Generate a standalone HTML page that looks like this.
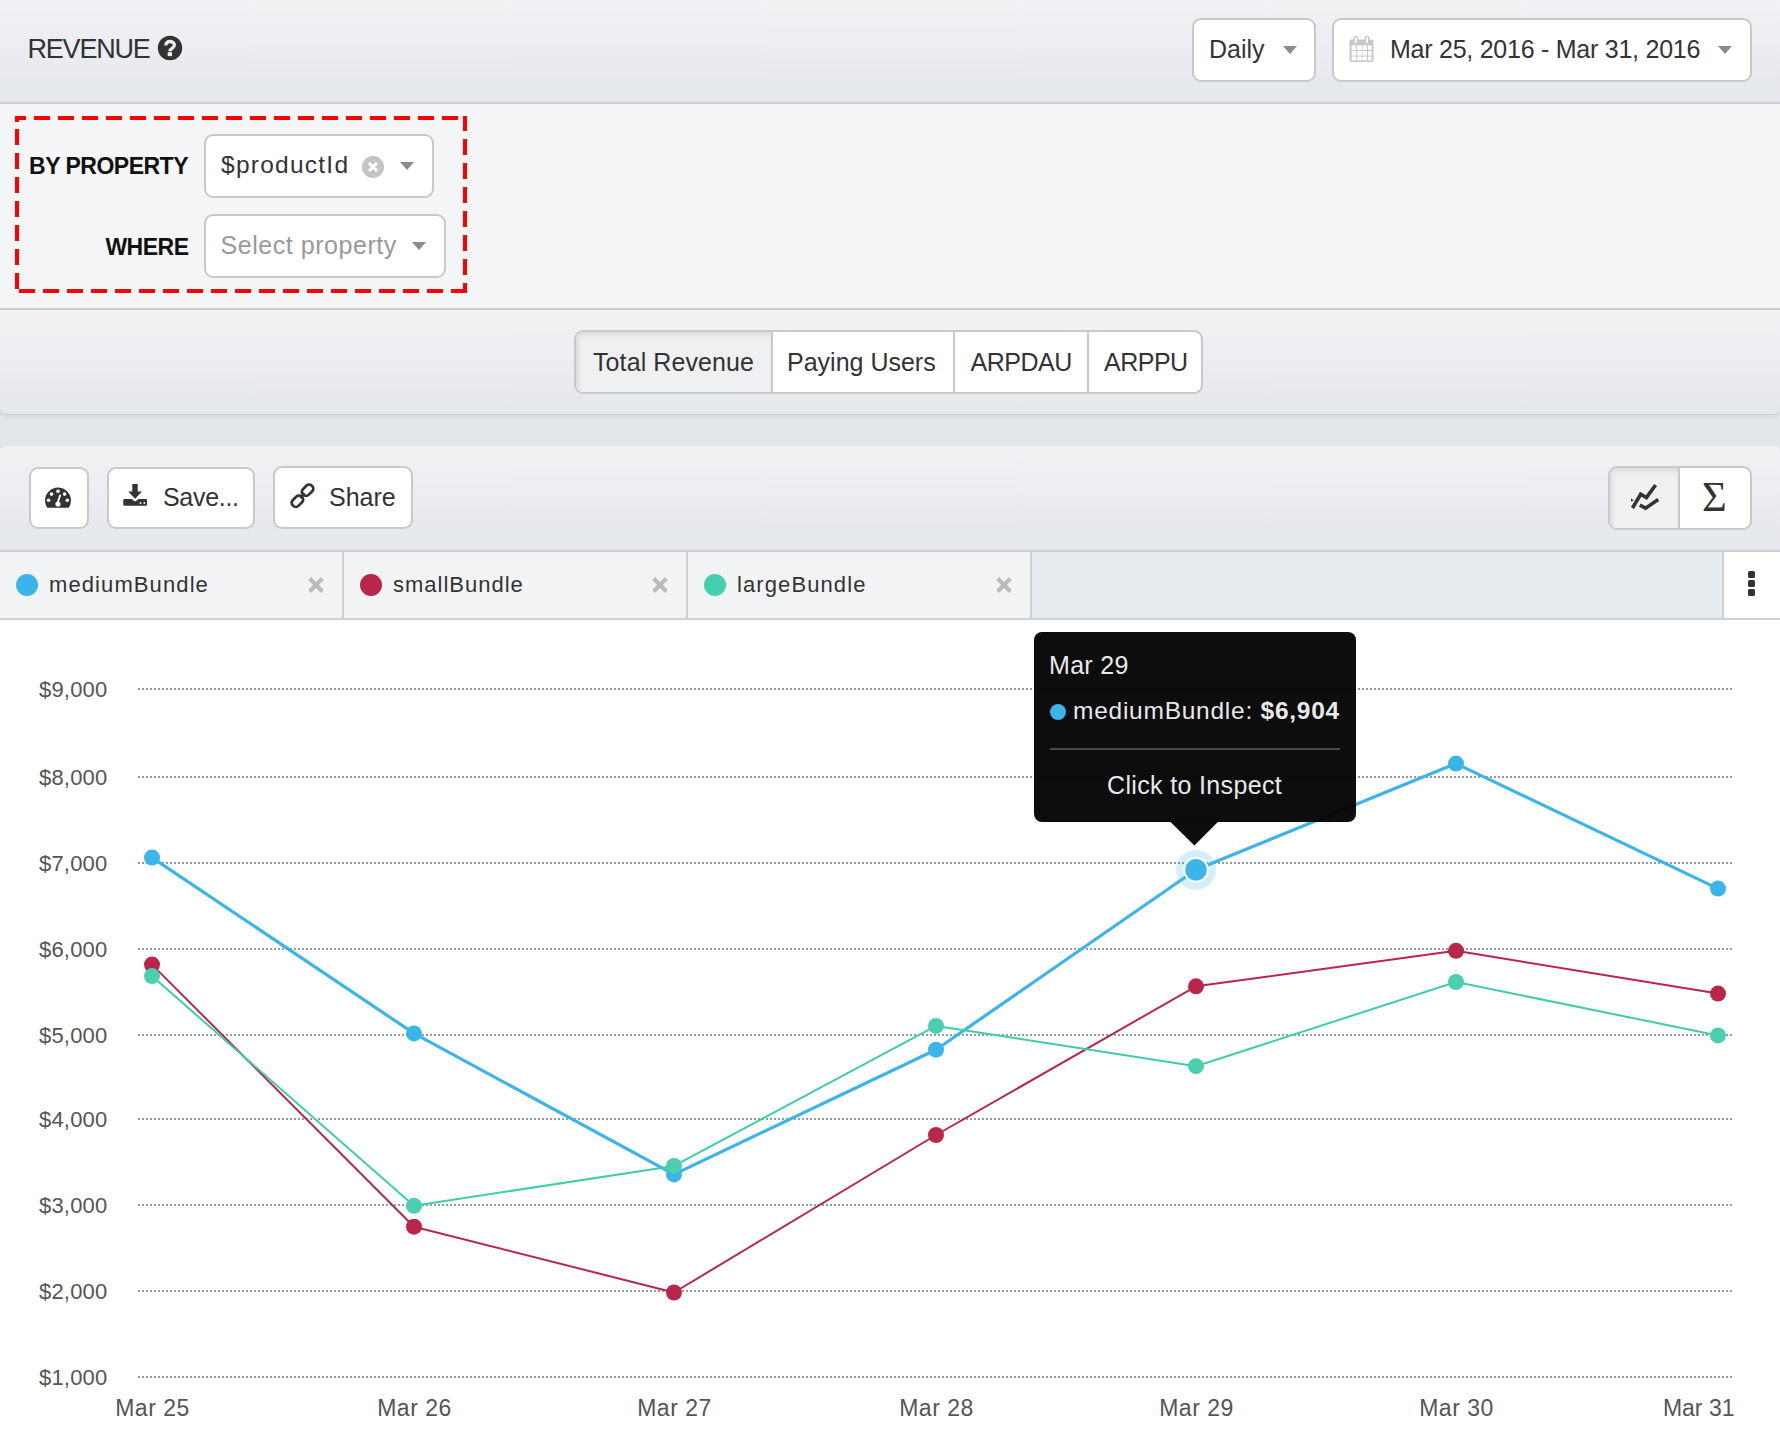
<!DOCTYPE html>
<html><head><meta charset="utf-8">
<style>
*{box-sizing:border-box;margin:0;padding:0}
html,body{width:1780px;height:1434px;overflow:hidden;background:#fff;font-family:"Liberation Sans",sans-serif;color:#333}
.abs{position:absolute}
.txt{position:absolute;white-space:nowrap;line-height:1}
.box{position:absolute;background:#fff;border:2px solid #c8c9cb;border-radius:9px}
.caret{position:absolute;width:0;height:0;border-left:7.5px solid transparent;border-right:7.5px solid transparent;border-top:8px solid #8b8b8b}
</style></head>
<body>

<div class="abs" style="left:0;top:0;width:1780px;height:104px;background:linear-gradient(#f1f2f4,#e4e7eb);border-bottom:2px solid #cbccce"></div>
<div class="txt" style="left:27.5px;top:36.14px;font-size:27px;color:#333;letter-spacing:-1.2px;">REVENUE</div>
<svg class="abs" style="left:157px;top:35px" width="26" height="26" viewBox="0 0 26 26"><circle cx="13" cy="13" r="12.2" fill="#333"/><path d="M8.8 10.6C8.8 7.9 10.6 6.5 13 6.5C15.5 6.5 17.4 7.9 17.4 10.1C17.4 12.8 14.4 13.1 13.1 15.2L12.9 16.3" fill="none" stroke="#eceef0" stroke-width="3.3"/><rect x="10.7" y="17.2" width="4.3" height="3.9" fill="#eceef0"/></svg>
<div class="box" style="left:1192px;top:18px;width:124px;height:64px"></div>
<div class="txt" style="left:1209px;top:36.84px;font-size:25px;color:#333;">Daily</div>
<div class="caret" style="left:1283px;top:46px"></div>
<div class="box" style="left:1332px;top:18px;width:420px;height:64px"></div>
<svg class="abs" style="left:1349px;top:35px" width="26" height="28" viewBox="0 0 26 28"><rect x="0.5" y="4.5" width="24" height="22.5" rx="2" fill="#c8c8c8"/><rect x="2.6" y="10.4" width="4.6" height="4.6" fill="#fff"/><rect x="8.2" y="10.4" width="4.6" height="4.6" fill="#fff"/><rect x="13.4" y="10.4" width="4.6" height="4.6" fill="#fff"/><rect x="19" y="10.4" width="3.6" height="4.6" fill="#fff"/><rect x="2.6" y="16" width="4.6" height="4.6" fill="#fff"/><rect x="8.2" y="16" width="4.6" height="4.6" fill="#fff"/><rect x="13.4" y="16" width="4.6" height="4.6" fill="#fff"/><rect x="19" y="16" width="3.6" height="4.6" fill="#fff"/><rect x="2.6" y="21.6" width="4.6" height="3.8" fill="#fff"/><rect x="8.2" y="21.6" width="4.6" height="3.8" fill="#fff"/><rect x="13.4" y="21.6" width="4.6" height="3.8" fill="#fff"/><rect x="19" y="21.6" width="3.6" height="3.8" fill="#fff"/><rect x="4.4" y="0.8" width="4.8" height="9" rx="2.2" fill="#c8c8c8"/><rect x="15.6" y="0.8" width="4.8" height="9" rx="2.2" fill="#c8c8c8"/><rect x="5.9" y="2.3" width="1.8" height="5.6" fill="#fff"/><rect x="17.1" y="2.3" width="1.8" height="5.6" fill="#fff"/></svg>
<div class="txt" style="left:1390px;top:36.84px;font-size:25px;color:#333;letter-spacing:-0.25px;">Mar 25, 2016 - Mar 31, 2016</div>
<div class="caret" style="left:1718px;top:46px"></div>
<div class="abs" style="left:0;top:104px;width:1780px;height:206px;background:#f4f5f7;border-bottom:2px solid #cbccce"></div>
<div class="txt" style="right:1592px;top:154.53px;font-size:23px;color:#111;font-weight:bold;letter-spacing:-0.5px;">BY PROPERTY</div>
<div class="txt" style="right:1591.5px;top:235.53px;font-size:23px;color:#111;font-weight:bold;letter-spacing:-0.5px;">WHERE</div>
<div class="box" style="left:204px;top:134px;width:230px;height:64px"></div>
<div class="txt" style="left:221px;top:153.26px;font-size:24.5px;color:#333;letter-spacing:1.25px;">$productId</div>
<svg class="abs" style="left:361px;top:155px" width="24" height="24" viewBox="0 0 24 24"><circle cx="12" cy="12" r="11" fill="#c4c4c4"/><path d="M8 8L16 16M16 8L8 16" stroke="#fff" stroke-width="3"/></svg>
<div class="caret" style="left:400px;top:162px"></div>
<div class="box" style="left:204px;top:214px;width:242px;height:64px"></div>
<div class="txt" style="left:220.5px;top:233.34px;font-size:25px;color:#999;letter-spacing:0.55px;">Select property</div>
<div class="caret" style="left:412px;top:242px"></div>
<svg class="abs" style="left:0;top:0" width="480" height="300" fill="#ff0000"><rect x="15" y="116" width="11" height="4"/><rect x="34" y="116" width="16" height="4"/><rect x="58" y="116" width="16" height="4"/><rect x="82" y="116" width="16" height="4"/><rect x="106" y="116" width="16" height="4"/><rect x="130" y="116" width="16" height="4"/><rect x="154" y="116" width="16" height="4"/><rect x="178" y="116" width="16" height="4"/><rect x="202" y="116" width="16" height="4"/><rect x="226" y="116" width="16" height="4"/><rect x="250" y="116" width="16" height="4"/><rect x="274" y="116" width="16" height="4"/><rect x="298" y="116" width="16" height="4"/><rect x="322" y="116" width="16" height="4"/><rect x="346" y="116" width="16" height="4"/><rect x="370" y="116" width="16" height="4"/><rect x="394" y="116" width="16" height="4"/><rect x="418" y="116" width="16" height="4"/><rect x="442" y="116" width="16" height="4"/><rect x="466" y="116" width="1" height="4"/><rect x="463" y="116" width="4" height="15"/><rect x="463" y="139" width="4" height="16"/><rect x="463" y="163" width="4" height="16"/><rect x="463" y="187" width="4" height="16"/><rect x="463" y="211" width="4" height="16"/><rect x="463" y="235" width="4" height="16"/><rect x="463" y="259" width="4" height="16"/><rect x="463" y="283" width="4" height="10"/><rect x="15" y="116" width="4" height="6"/><rect x="15" y="129" width="4" height="16"/><rect x="15" y="153" width="4" height="16"/><rect x="15" y="177" width="4" height="16"/><rect x="15" y="201" width="4" height="16"/><rect x="15" y="225" width="4" height="16"/><rect x="15" y="249" width="4" height="16"/><rect x="15" y="273" width="4" height="16"/><rect x="19" y="289" width="16" height="4"/><rect x="43" y="289" width="16" height="4"/><rect x="67" y="289" width="16" height="4"/><rect x="91" y="289" width="16" height="4"/><rect x="115" y="289" width="16" height="4"/><rect x="139" y="289" width="16" height="4"/><rect x="163" y="289" width="16" height="4"/><rect x="187" y="289" width="16" height="4"/><rect x="211" y="289" width="16" height="4"/><rect x="235" y="289" width="16" height="4"/><rect x="259" y="289" width="16" height="4"/><rect x="283" y="289" width="16" height="4"/><rect x="307" y="289" width="16" height="4"/><rect x="331" y="289" width="16" height="4"/><rect x="355" y="289" width="16" height="4"/><rect x="379" y="289" width="16" height="4"/><rect x="403" y="289" width="16" height="4"/><rect x="427" y="289" width="16" height="4"/><rect x="451" y="289" width="16" height="4"/></svg>
<div class="abs" style="left:0;top:310px;width:1780px;height:150px;background:#e4e7ea"></div>
<div class="abs" style="left:0;top:310px;width:1780px;height:104px;background:linear-gradient(#f1f2f4,#e5e8eb);border-radius:0 0 6px 6px;box-shadow:0 1px 0 rgba(0,0,0,0.08),0 5px 0 rgba(0,0,0,0.03)"></div>
<div class="abs" style="left:574px;top:330px;width:629px;height:64px;background:#fff;border:2px solid #c8c9cb;border-radius:9px;overflow:hidden"><div class="abs" style="left:0;top:0;width:195px;height:60px;background:#eff0f2;box-shadow:inset 2px 3px 5px rgba(0,0,0,0.10)"></div><div class="abs" style="left:195px;top:0;width:2px;height:60px;background:#c8c9cb"></div><div class="abs" style="left:377px;top:0;width:2px;height:60px;background:#c8c9cb"></div><div class="abs" style="left:511px;top:0;width:2px;height:60px;background:#c8c9cb"></div></div>
<div class="txt" style="left:593px;top:349.84px;font-size:25px;color:#333;letter-spacing:0.1px;">Total Revenue</div>
<div class="txt" style="left:787px;top:349.84px;font-size:25px;color:#333;">Paying Users</div>
<div class="txt" style="left:970.5px;top:349.84px;font-size:25px;color:#333;letter-spacing:-0.5px;">ARPDAU</div>
<div class="txt" style="left:1104px;top:349.84px;font-size:25px;color:#333;letter-spacing:-0.5px;">ARPPU</div>
<div class="abs" style="left:0;top:446px;width:1780px;height:106px;background:linear-gradient(#f1f2f4,#e4e7eb);border-radius:6px 6px 0 0;border-bottom:2px solid #cbccce"></div>
<div class="box" style="left:29px;top:467px;width:60px;height:62px"></div>
<svg class="abs" style="left:44px;top:486px" width="28" height="24" viewBox="44 486 28 24"><defs><clipPath id="gc"><rect x="40" y="480" width="40" height="27.8"/></clipPath></defs><g clip-path="url(#gc)"><circle cx="58" cy="500.6" r="13" fill="#333"/></g><g fill="#fff"><circle cx="58" cy="491.3" r="1.8"/><circle cx="51.5" cy="494.1" r="1.8"/><circle cx="64.6" cy="494.1" r="1.8"/><circle cx="48.6" cy="500.3" r="1.8"/><circle cx="67.3" cy="500.3" r="1.8"/><circle cx="58" cy="504" r="2.6"/></g><path d="M57.6 503L60.3 494.8" stroke="#fff" stroke-width="1.9"/></svg>
<div class="box" style="left:107px;top:467px;width:148px;height:62px"></div>
<svg class="abs" style="left:122px;top:483px" width="26" height="24" viewBox="122 483 26 24"><path d="M132.3 484h5.4v7.4h4.3l-6.9 7.3-6.9-7.3h4.1z" fill="#333"/><path d="M123.2 500.3a1.3 1.3 0 0 1 1.3-1.3h7l3.6 2.6 3.6-2.6h7a1.3 1.3 0 0 1 1.3 1.3v4.1a1.3 1.3 0 0 1-1.3 1.3h-21.1a1.3 1.3 0 0 1-1.3-1.3z" fill="#333"/><circle cx="140.5" cy="503" r="0.9" fill="#fff"/><circle cx="144.3" cy="503" r="0.9" fill="#fff"/></svg>
<div class="txt" style="left:163px;top:485.34px;font-size:25px;color:#333;letter-spacing:-0.3px;">Save...</div>
<div class="box" style="left:273px;top:466px;width:140px;height:63px"></div>
<svg class="abs" style="left:288px;top:481px" width="30" height="30" viewBox="288 481 30 30"><g fill="none" stroke="#333" stroke-width="2.7"><rect x="-4" y="-6.2" width="8" height="12.4" rx="3.6" transform="translate(307.6 490.2) rotate(45)"/><rect x="-4" y="-6.2" width="8" height="12.4" rx="3.6" transform="translate(297.4 501.2) rotate(45)"/></g><path d="M300.4 498.2L304.6 493.4" stroke="#333" stroke-width="2.7"/></svg>
<div class="txt" style="left:329px;top:484.84px;font-size:25px;color:#333;">Share</div>
<div class="abs" style="left:1608px;top:466px;width:144px;height:64px;background:#fff;border:2px solid #c8c9cb;border-radius:9px;overflow:hidden"><div class="abs" style="left:0;top:0;width:68px;height:60px;background:#eff0f2;box-shadow:inset 2px 3px 5px rgba(0,0,0,0.10)"></div><div class="abs" style="left:68px;top:0;width:2px;height:60px;background:#c8c9cb"></div></div>
<svg class="abs" style="left:1626px;top:480px" width="38" height="34" viewBox="1626 480 38 34"><path d="M1632.5 508L1640.7 494.3L1646.4 497.6L1655.6 485" fill="none" stroke="#333" stroke-width="3.6" stroke-linejoin="miter"/><path d="M1639.8 505.2L1645.6 508.2L1658.2 499.6" fill="none" stroke="#333" stroke-width="3.6"/><path d="M1631 498.5L1633.8 500.3L1631 501.8z" fill="#333"/></svg>
<div class="txt" style="left:1702px;top:476px;font-family:'Liberation Serif',serif;font-size:42.5px;color:#333">&Sigma;</div>
<div class="abs" style="left:0;top:552px;width:1780px;height:68px;background:#e8ebee;border-bottom:2px solid #cfd0d2"></div>
<div class="abs" style="left:0px;top:552px;width:344px;height:66px;background:#f2f3f5;border-right:2px solid #cfd0d2"></div>
<div class="abs" style="left:16px;top:574px;width:22px;height:22px;border-radius:50%;background:#3bb5e8"></div>
<div class="txt" style="left:49px;top:573.88px;font-size:22px;color:#333;letter-spacing:1.1px;">mediumBundle</div>
<svg class="abs" style="left:308px;top:576.5px" width="16" height="16" viewBox="0 0 16 16"><path d="M1.6 1.6L14.4 14.4M14.4 1.6L1.6 14.4" stroke="#bbbbbb" stroke-width="4.2"/></svg>
<div class="abs" style="left:344px;top:552px;width:344px;height:66px;background:#f2f3f5;border-right:2px solid #cfd0d2"></div>
<div class="abs" style="left:360px;top:574px;width:22px;height:22px;border-radius:50%;background:#b9264b"></div>
<div class="txt" style="left:393px;top:573.88px;font-size:22px;color:#333;letter-spacing:1.0px;">smallBundle</div>
<svg class="abs" style="left:652px;top:576.5px" width="16" height="16" viewBox="0 0 16 16"><path d="M1.6 1.6L14.4 14.4M14.4 1.6L1.6 14.4" stroke="#bbbbbb" stroke-width="4.2"/></svg>
<div class="abs" style="left:688px;top:552px;width:344px;height:66px;background:#f2f3f5;border-right:2px solid #cfd0d2"></div>
<div class="abs" style="left:704px;top:574px;width:22px;height:22px;border-radius:50%;background:#46cfae"></div>
<div class="txt" style="left:737px;top:573.88px;font-size:22px;color:#333;letter-spacing:1.1px;">largeBundle</div>
<svg class="abs" style="left:996px;top:576.5px" width="16" height="16" viewBox="0 0 16 16"><path d="M1.6 1.6L14.4 14.4M14.4 1.6L1.6 14.4" stroke="#bbbbbb" stroke-width="4.2"/></svg>
<div class="abs" style="left:1722px;top:552px;width:58px;height:66px;background:#fff;border-left:2px solid #cfd0d2"></div>
<div class="abs" style="left:1748px;top:571px;width:7px;height:7px;border-radius:1.5px;background:#333"></div>
<div class="abs" style="left:1748px;top:580px;width:7px;height:7px;border-radius:1.5px;background:#333"></div>
<div class="abs" style="left:1748px;top:589px;width:7px;height:7px;border-radius:1.5px;background:#333"></div>
<svg class="abs" style="left:0;top:0" width="1780" height="1434" viewBox="0 0 1780 1434">
<line x1="138" y1="689" x2="1732" y2="689" stroke="#959ba4" stroke-width="2" stroke-dasharray="2 2"/>
<line x1="138" y1="777" x2="1732" y2="777" stroke="#959ba4" stroke-width="2" stroke-dasharray="2 2"/>
<line x1="138" y1="863" x2="1732" y2="863" stroke="#959ba4" stroke-width="2" stroke-dasharray="2 2"/>
<line x1="138" y1="949" x2="1732" y2="949" stroke="#959ba4" stroke-width="2" stroke-dasharray="2 2"/>
<line x1="138" y1="1035" x2="1732" y2="1035" stroke="#959ba4" stroke-width="2" stroke-dasharray="2 2"/>
<line x1="138" y1="1119" x2="1732" y2="1119" stroke="#959ba4" stroke-width="2" stroke-dasharray="2 2"/>
<line x1="138" y1="1205" x2="1732" y2="1205" stroke="#959ba4" stroke-width="2" stroke-dasharray="2 2"/>
<line x1="138" y1="1291" x2="1732" y2="1291" stroke="#959ba4" stroke-width="2" stroke-dasharray="2 2"/>
<line x1="138" y1="1377" x2="1732" y2="1377" stroke="#959ba4" stroke-width="2" stroke-dasharray="2 2"/>
<polyline points="152.0,857.6 414.0,1033.4 674.0,1174.4 936.0,1049.7 1196.0,869.8 1456.0,763.6 1718.0,888.6" fill="none" stroke="#3bb5e8" stroke-width="3.2" stroke-linejoin="round"/>
<circle cx="152.0" cy="857.6" r="8" fill="#3bb5e8"/>
<circle cx="414.0" cy="1033.4" r="8" fill="#3bb5e8"/>
<circle cx="674.0" cy="1174.4" r="8" fill="#3bb5e8"/>
<circle cx="936.0" cy="1049.7" r="8" fill="#3bb5e8"/>
<circle cx="1456.0" cy="763.6" r="8" fill="#3bb5e8"/>
<circle cx="1718.0" cy="888.6" r="8" fill="#3bb5e8"/>
<polyline points="152.0,964.6 414.0,1226.7 674.0,1292.5 936.0,1135.0 1196.0,986.3 1456.0,950.8 1718.0,993.6" fill="none" stroke="#b9264b" stroke-width="2" stroke-linejoin="round"/>
<circle cx="152.0" cy="964.6" r="8" fill="#b9264b"/>
<circle cx="414.0" cy="1226.7" r="8" fill="#b9264b"/>
<circle cx="674.0" cy="1292.5" r="8" fill="#b9264b"/>
<circle cx="936.0" cy="1135.0" r="8" fill="#b9264b"/>
<circle cx="1196.0" cy="986.3" r="8" fill="#b9264b"/>
<circle cx="1456.0" cy="950.8" r="8" fill="#b9264b"/>
<circle cx="1718.0" cy="993.6" r="8" fill="#b9264b"/>
<polyline points="152.0,976.1 414.0,1205.8 674.0,1165.9 936.0,1025.9 1196.0,1066.2 1456.0,982.0 1718.0,1035.4" fill="none" stroke="#3ecdab" stroke-width="2" stroke-linejoin="round"/>
<circle cx="152.0" cy="976.1" r="8" fill="#4ccfb0"/>
<circle cx="414.0" cy="1205.8" r="8" fill="#4ccfb0"/>
<circle cx="674.0" cy="1165.9" r="8" fill="#4ccfb0"/>
<circle cx="936.0" cy="1025.9" r="8" fill="#4ccfb0"/>
<circle cx="1196.0" cy="1066.2" r="8" fill="#4ccfb0"/>
<circle cx="1456.0" cy="982.0" r="8" fill="#4ccfb0"/>
<circle cx="1718.0" cy="1035.4" r="8" fill="#4ccfb0"/>
<circle cx="1196" cy="869.8" r="20" fill="#3bb5e8" fill-opacity="0.22"/>
<circle cx="1196" cy="869.8" r="12.8" fill="#fff"/>
<circle cx="1196" cy="869.8" r="10.8" fill="#3bb5e8"/>
</svg>
<div class="txt" style="right:1672.5px;top:678.88px;font-size:22px;color:#555;letter-spacing:0.2px;">$9,000</div>
<div class="txt" style="right:1672.5px;top:766.88px;font-size:22px;color:#555;letter-spacing:0.2px;">$8,000</div>
<div class="txt" style="right:1672.5px;top:852.88px;font-size:22px;color:#555;letter-spacing:0.2px;">$7,000</div>
<div class="txt" style="right:1672.5px;top:938.88px;font-size:22px;color:#555;letter-spacing:0.2px;">$6,000</div>
<div class="txt" style="right:1672.5px;top:1024.88px;font-size:22px;color:#555;letter-spacing:0.2px;">$5,000</div>
<div class="txt" style="right:1672.5px;top:1108.88px;font-size:22px;color:#555;letter-spacing:0.2px;">$4,000</div>
<div class="txt" style="right:1672.5px;top:1194.88px;font-size:22px;color:#555;letter-spacing:0.2px;">$3,000</div>
<div class="txt" style="right:1672.5px;top:1280.88px;font-size:22px;color:#555;letter-spacing:0.2px;">$2,000</div>
<div class="txt" style="right:1672.5px;top:1366.88px;font-size:22px;color:#555;letter-spacing:0.2px;">$1,000</div>
<div class="txt" style="left:-47.5px;width:400px;text-align:center;top:1397.03px;font-size:23px;color:#555;letter-spacing:0.5px;">Mar 25</div>
<div class="txt" style="left:214.5px;width:400px;text-align:center;top:1397.03px;font-size:23px;color:#555;letter-spacing:0.5px;">Mar 26</div>
<div class="txt" style="left:474.5px;width:400px;text-align:center;top:1397.03px;font-size:23px;color:#555;letter-spacing:0.5px;">Mar 27</div>
<div class="txt" style="left:736.5px;width:400px;text-align:center;top:1397.03px;font-size:23px;color:#555;letter-spacing:0.5px;">Mar 28</div>
<div class="txt" style="left:996.5px;width:400px;text-align:center;top:1397.03px;font-size:23px;color:#555;letter-spacing:0.5px;">Mar 29</div>
<div class="txt" style="left:1256.5px;width:400px;text-align:center;top:1397.03px;font-size:23px;color:#555;letter-spacing:0.5px;">Mar 30</div>
<div class="txt" style="right:45.5px;top:1397.03px;font-size:23px;color:#555;">Mar 31</div>
<svg class="abs" style="left:1030px;top:628px" width="330" height="222" viewBox="1030 628 330 222"><rect x="1034" y="632" width="322" height="190" rx="8" fill="#000" fill-opacity="0.95"/><path d="M1170 821.5L1194.4 845.5L1218.4 821.5z" fill="#000" fill-opacity="0.95"/><rect x="1050" y="748" width="290" height="2" fill="#4a4a4a"/><circle cx="1058" cy="712" r="8" fill="#3bb5e8"/></svg>
<div class="txt" style="left:1049px;top:653.34px;font-size:25px;color:#e8e9ea;letter-spacing:0.3px;">Mar 29</div>
<div class="txt" style="left:1073px;top:699.26px;font-size:24.5px;color:#e8e9ea;letter-spacing:0.75px;">mediumBundle: <b>$6,904</b></div>
<div class="txt" style="left:1107px;top:772.84px;font-size:25px;color:#e8e9ea;letter-spacing:0.35px;">Click to Inspect</div>
</body></html>
